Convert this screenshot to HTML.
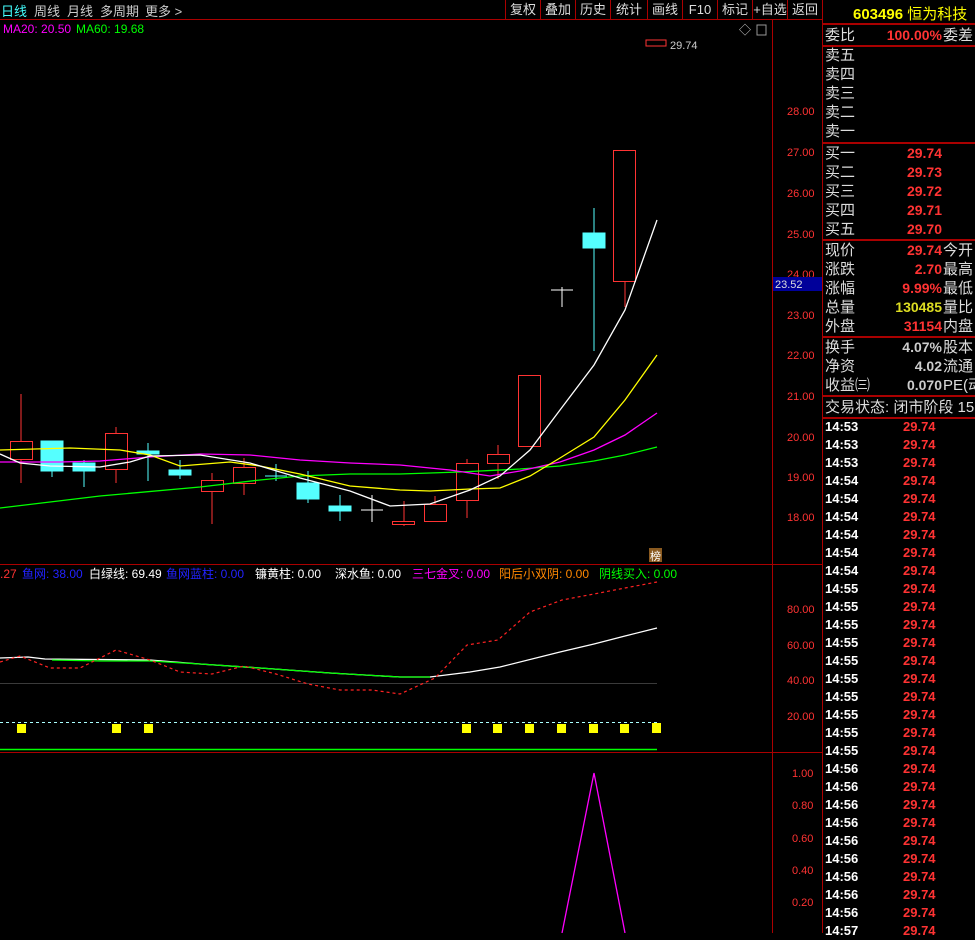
<!DOCTYPE html>
<html><head><meta charset="utf-8"><style>
html,body{margin:0;padding:0;background:#000;width:975px;height:933px;overflow:hidden;font-family:"Liberation Sans","Noto Sans CJK SC",sans-serif}
.t{position:absolute;white-space:nowrap}
#top{position:absolute;left:0;top:0;width:822px;height:19px;border-bottom:1px solid #a00;font-size:13px;color:#ccc}
.btn{position:absolute;top:0;height:19px;line-height:19px;border-left:1px solid #a00;text-align:center;font-size:13px;color:#ddd}
#rp{position:absolute;left:822px;top:0;width:153px;height:933px;border-left:1px solid #a00;font-size:15px;color:#ddd}
.row{position:absolute;left:2px;height:19px;line-height:19px;width:151px;white-space:nowrap}
.row .v{position:absolute;right:34px;font-weight:bold;font-size:14px}
.row .r{position:absolute;left:118px}
.sep{position:absolute;left:0;width:153px;height:0;border-top:2px solid #a00}
.tr{position:absolute;left:2px;height:18px;line-height:18px;font-weight:bold;font-size:13px;color:#fff;width:150px}
.tr span{position:absolute;left:78px;color:#ff3333}
</style></head><body>
<div id="top">
<span class="t" style="left:1px;top:1px;color:#4ff">日线</span>
<span class="t" style="left:34px;top:1px">周线</span>
<span class="t" style="left:67px;top:1px">月线</span>
<span class="t" style="left:100px;top:1px">多周期</span>
<span class="t" style="left:145px;top:1px">更多 &gt;</span>
<div class="btn" style="left:505px;width:34px">复权</div>
<div class="btn" style="left:540px;width:34px">叠加</div>
<div class="btn" style="left:575px;width:34px">历史</div>
<div class="btn" style="left:610px;width:36px">统计</div>
<div class="btn" style="left:647px;width:34px">画线</div>
<div class="btn" style="left:682px;width:34px">F10</div>
<div class="btn" style="left:717px;width:34px">标记</div>
<div class="btn" style="left:752px;width:34px">+自选</div>
<div class="btn" style="left:787px;width:34px">返回</div>
</div>
<svg width="822" height="933" style="position:absolute;left:0;top:0" font-family="Liberation Sans, Noto Sans CJK SC, sans-serif">
<line x1="772.5" y1="20" x2="772.5" y2="933" stroke="#a00"/>
<line x1="0" y1="564.5" x2="822" y2="564.5" stroke="#a00"/>
<line x1="0" y1="752.5" x2="822" y2="752.5" stroke="#a00"/>
<text x="3" y="33" font-size="12" fill="#f0f">MA20: 20.50</text>
<text x="76" y="33" font-size="12" fill="#0f0">MA60: 19.68</text>
<text x="739" y="34" font-size="12" fill="#ccc">◇</text>
<rect x="757" y="25" width="9" height="10" fill="none" stroke="#999"/>
<rect x="646" y="40" width="20" height="6" fill="none" stroke="#f33"/>
<text x="670" y="49" font-size="11" fill="#ccc">29.74</text>
<g font-size="11" fill="#f33">
<text x="787" y="115">28.00</text>
<text x="787" y="156">27.00</text><text x="787" y="197">26.00</text><text x="787" y="238">25.00</text>
<text x="787" y="278">24.00</text><text x="787" y="319">23.00</text><text x="787" y="359">22.00</text>
<text x="787" y="400">21.00</text><text x="787" y="441">20.00</text><text x="787" y="481">19.00</text>
<text x="787" y="521">18.00</text>
</g>
<rect x="773" y="277" width="49" height="14" fill="#00009a"/>
<text x="775" y="288" font-size="11" fill="#ddd">23.52</text>
<rect x="649" y="548" width="13" height="14" fill="#8a5a20"/>
<text x="650" y="560" font-size="11" fill="#fff">榜</text>
<g stroke="#f33" fill="none" stroke-width="1">
<line x1="21" y1="394" x2="21" y2="483"/><rect x="10.5" y="441.5" width="22" height="18" fill="#000"/>
<line x1="116" y1="427" x2="116" y2="483"/><rect x="105.5" y="433.5" width="22" height="36" fill="#000"/>
<line x1="212" y1="473" x2="212" y2="524"/><rect x="201.5" y="480.5" width="22" height="11" fill="#000"/>
<line x1="244" y1="458" x2="244" y2="495"/><rect x="233.5" y="467.5" width="22" height="16" fill="#000"/>
<line x1="404" y1="501" x2="404" y2="526"/><rect x="392.5" y="521.5" width="22" height="3" fill="#000"/>
<line x1="435" y1="496" x2="435" y2="504"/><rect x="424.5" y="504.5" width="22" height="17" fill="#000"/>
<line x1="467" y1="459" x2="467" y2="518"/><rect x="456.5" y="463.5" width="22" height="37" fill="#000"/>
<line x1="498" y1="445" x2="498" y2="479"/><rect x="487.5" y="454.5" width="22" height="9" fill="#000"/>
<rect x="518.5" y="375.5" width="22" height="71" fill="#000"/>
<line x1="625" y1="281" x2="625" y2="307"/><rect x="613.5" y="150.5" width="22" height="131" fill="#000"/>
</g>
<g fill="#55ffff" stroke="#55ffff">
<line x1="52" y1="441" x2="52" y2="477"/><rect x="41" y="441" width="22" height="30"/>
<line x1="84" y1="460" x2="84" y2="487"/><rect x="73" y="463" width="22" height="8"/>
<line x1="148" y1="443" x2="148" y2="481"/><rect x="137" y="451" width="22" height="3"/>
<line x1="180" y1="460" x2="180" y2="479"/><rect x="169" y="470" width="22" height="5"/>
<line x1="276" y1="464" x2="276" y2="481"/><line x1="265" y1="476" x2="287" y2="476"/>
<line x1="308" y1="471" x2="308" y2="503"/><rect x="297" y="483" width="22" height="16"/>
<line x1="340" y1="495" x2="340" y2="521"/><rect x="329" y="506" width="22" height="5"/>
<line x1="594" y1="208" x2="594" y2="351"/><rect x="583" y="233" width="22" height="15"/>
</g>
<g stroke="#fff"><line x1="372" y1="495" x2="372" y2="522"/><line x1="361" y1="510" x2="383" y2="510"/>
<line x1="562" y1="287" x2="562" y2="307"/><line x1="551" y1="290" x2="573" y2="290"/></g>
<g fill="none" stroke-width="1.3">
<polyline stroke="#0f0" points="0,508 100,496 200,487 260,480 300,476 350,474 400,474 460,472 520,469 560,466 594,461 625,455 657,447"/>
<polyline stroke="#f0f" points="0,462 60,462 100,461 150,457 200,454 250,455 300,460 350,463 400,465 450,470 490,476 520,471 560,462 594,450 625,435 657,413"/>
<polyline stroke="#ff0" points="0,450 70,448 120,450 150,455 180,466 230,462 260,466 300,474 350,486 400,490 430,491 470,489 500,488 530,476 560,458 594,437 625,400 657,355"/>
<polyline stroke="#fff" points="0,454 20,463 50,466 100,467 130,462 150,456 200,455 250,463 300,478 350,491 390,506 430,504 470,490 500,476 530,450 560,410 594,365 625,310 657,220"/>
</g>
<g font-size="12">
<text x="0" y="578" fill="#f33">.27</text>
<text x="22" y="578" fill="#22f">鱼网: 38.00</text>
<text x="89" y="578" fill="#fff">白绿线: 69.49</text>
<text x="166" y="578" fill="#22f">鱼网蓝柱: 0.00</text>
<text x="255" y="578" fill="#fff">镰黄柱: 0.00</text>
<text x="335" y="578" fill="#fff">深水鱼: 0.00</text>
<text x="412" y="578" fill="#f0f">三七金叉: 0.00</text>
<text x="499" y="578" fill="#f80">阳后小双阴: 0.00</text>
<text x="599" y="578" fill="#0f0">阴线买入: 0.00</text>
</g>
<g font-size="11" fill="#f33">
<text x="787" y="613">80.00</text><text x="787" y="649">60.00</text><text x="787" y="684">40.00</text><text x="787" y="720">20.00</text>
<text x="792" y="777">1.00</text><text x="792" y="809">0.80</text><text x="792" y="842">0.60</text><text x="792" y="874">0.40</text><text x="792" y="906">0.20</text>
</g>
<line x1="0" y1="683.5" x2="657" y2="683.5" stroke="#3a3a3a"/>
<line x1="0" y1="722.5" x2="657" y2="722.5" stroke="#aff" stroke-dasharray="3,3"/>
<line x1="0" y1="749.5" x2="657" y2="749.5" stroke="#0f0" stroke-width="1.5"/>
<polyline fill="none" stroke="#fff" stroke-width="1.3" points="0,658 28,657 45,659 150,660 200,664 260,668 330,673 400,677 430,677 470,672 500,667 560,652 594,644 625,636 657,628"/>
<polyline fill="none" stroke="#0f0" stroke-width="1.3" points="52,660 100,661 150,661 200,664 260,668 330,673 400,677 430,677"/>
<polyline fill="none" stroke="#f22" stroke-width="1.2" stroke-dasharray="3,3" points="0,662 20,656 50,668 80,668 116,650 150,660 180,672 212,674 244,666 276,674 308,684 340,690 372,690 400,694 435,678 467,645 498,640 530,612 562,600 594,594 625,588 657,582"/>
<g fill="#ff0">
<rect x="17" y="724" width="9" height="9"/><rect x="112" y="724" width="9" height="9"/><rect x="144" y="724" width="9" height="9"/>
<rect x="462" y="724" width="9" height="9"/><rect x="493" y="724" width="9" height="9"/><rect x="525" y="724" width="9" height="9"/>
<rect x="557" y="724" width="9" height="9"/><rect x="589" y="724" width="9" height="9"/><rect x="620" y="724" width="9" height="9"/><rect x="652" y="723" width="9" height="10"/>
</g>
<polyline fill="none" stroke="#f0f" stroke-width="1.3" points="562,933 594,773 625,933"/>
</svg>
<div id="rp">
<div class="t" style="left:30px;top:3px;color:#ff0;font-size:15px;font-weight:bold">603496 <span style="font-weight:normal">恒为科技</span></div>
<div class="sep" style="top:23px"></div>
<div class="row" style="top:26px">委比<span class="v" style="color:#f33;right:34px">100.00%</span><span class="r" style="left:118px">委差</span></div>
<div class="sep" style="top:45px"></div>
<div class="row" style="top:46px">卖五</div><div class="row" style="top:65px">卖四</div><div class="row" style="top:84px">卖三</div><div class="row" style="top:103px">卖二</div><div class="row" style="top:122px">卖一</div>
<div class="sep" style="top:142px"></div>
<div class="row" style="top:144px">买一<span class="v" style="color:#f33">29.74</span></div>
<div class="row" style="top:163px">买二<span class="v" style="color:#f33">29.73</span></div>
<div class="row" style="top:182px">买三<span class="v" style="color:#f33">29.72</span></div>
<div class="row" style="top:201px">买四<span class="v" style="color:#f33">29.71</span></div>
<div class="row" style="top:220px">买五<span class="v" style="color:#f33">29.70</span></div>
<div class="sep" style="top:239px"></div>
<div class="row" style="top:241px">现价<span class="v" style="color:#f33">29.74</span><span class="r">今开</span></div>
<div class="row" style="top:260px">涨跌<span class="v" style="color:#f33">2.70</span><span class="r">最高</span></div>
<div class="row" style="top:279px">涨幅<span class="v" style="color:#f33">9.99%</span><span class="r">最低</span></div>
<div class="row" style="top:298px">总量<span class="v" style="color:#dd2">130485</span><span class="r">量比</span></div>
<div class="row" style="top:317px">外盘<span class="v" style="color:#f33">31154</span><span class="r">内盘</span></div>
<div class="sep" style="top:336px"></div>
<div class="row" style="top:338px">换手<span class="v" style="color:#ccc">4.07%</span><span class="r">股本</span></div>
<div class="row" style="top:357px">净资<span class="v" style="color:#ccc">4.02</span><span class="r">流通</span></div>
<div class="row" style="top:376px">收益㈢<span class="v" style="color:#ccc">0.070</span><span class="r">PE(动</span></div>
<div class="sep" style="top:395px"></div>
<div class="row" style="top:398px">交易状态: 闭市阶段 15</div>
<div class="sep" style="top:417px"></div>
<div class="tr" style="top:418px">14:53<span>29.74</span></div>
<div class="tr" style="top:436px">14:53<span>29.74</span></div>
<div class="tr" style="top:454px">14:53<span>29.74</span></div>
<div class="tr" style="top:472px">14:54<span>29.74</span></div>
<div class="tr" style="top:490px">14:54<span>29.74</span></div>
<div class="tr" style="top:508px">14:54<span>29.74</span></div>
<div class="tr" style="top:526px">14:54<span>29.74</span></div>
<div class="tr" style="top:544px">14:54<span>29.74</span></div>
<div class="tr" style="top:562px">14:54<span>29.74</span></div>
<div class="tr" style="top:580px">14:55<span>29.74</span></div>
<div class="tr" style="top:598px">14:55<span>29.74</span></div>
<div class="tr" style="top:616px">14:55<span>29.74</span></div>
<div class="tr" style="top:634px">14:55<span>29.74</span></div>
<div class="tr" style="top:652px">14:55<span>29.74</span></div>
<div class="tr" style="top:670px">14:55<span>29.74</span></div>
<div class="tr" style="top:688px">14:55<span>29.74</span></div>
<div class="tr" style="top:706px">14:55<span>29.74</span></div>
<div class="tr" style="top:724px">14:55<span>29.74</span></div>
<div class="tr" style="top:742px">14:55<span>29.74</span></div>
<div class="tr" style="top:760px">14:56<span>29.74</span></div>
<div class="tr" style="top:778px">14:56<span>29.74</span></div>
<div class="tr" style="top:796px">14:56<span>29.74</span></div>
<div class="tr" style="top:814px">14:56<span>29.74</span></div>
<div class="tr" style="top:832px">14:56<span>29.74</span></div>
<div class="tr" style="top:850px">14:56<span>29.74</span></div>
<div class="tr" style="top:868px">14:56<span>29.74</span></div>
<div class="tr" style="top:886px">14:56<span>29.74</span></div>
<div class="tr" style="top:904px">14:56<span>29.74</span></div>
<div class="tr" style="top:922px">14:57<span>29.74</span></div>
</div>
</body></html>
